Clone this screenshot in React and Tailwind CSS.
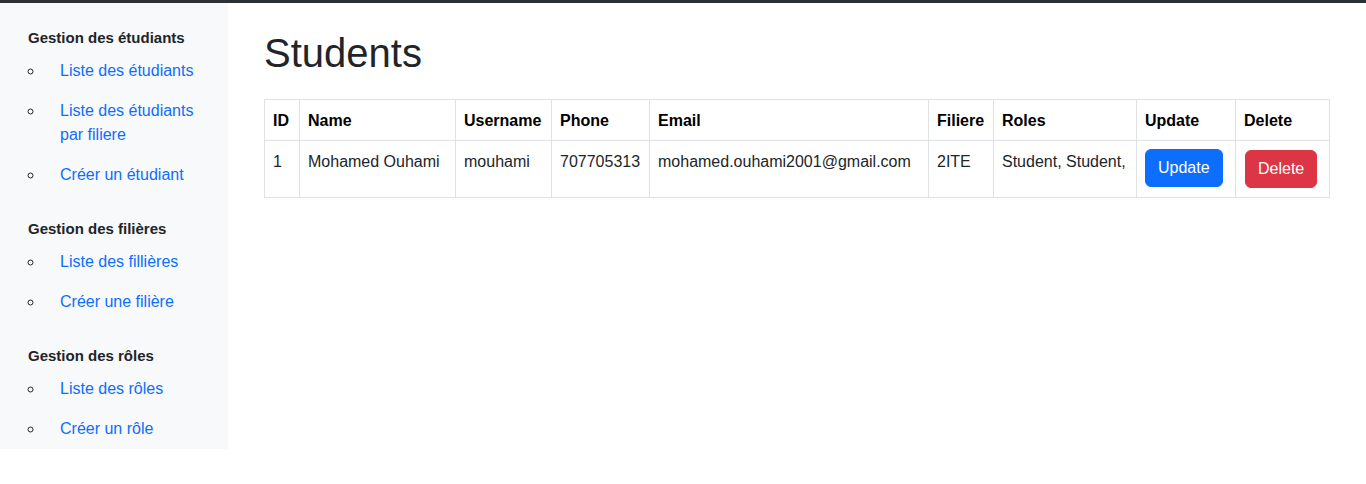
import React from 'react';

const sections = [
  {
    title: 'Gestion des étudiants',
    links: ['Liste des étudiants', 'Liste des étudiants par filiere', 'Créer un étudiant'],
  },
  {
    title: 'Gestion des filières',
    links: ['Liste des fillières', 'Créer une filière'],
  },
  {
    title: 'Gestion des rôles',
    links: ['Liste des rôles', 'Créer un rôle'],
  },
];

const students = [
  {
    id: 1,
    name: 'Mohamed Ouhami',
    username: 'mouhami',
    phone: '707705313',
    email: 'mohamed.ouhami2001@gmail.com',
    filiere: '2ITE',
    roles: 'Student, Student,',
  },
];

const Sidebar = () => (
  <aside className="w-[228px] shrink-0 bg-[#f8f9fa] px-3 pt-[22px] pb-px flex flex-col gap-[22px]">
    {sections.map((s) => (
      <div key={s.title}>
        <h6 className="px-4 text-[15px] font-bold leading-[25px] text-[#212529]">{s.title}</h6>
        <ul className="list-[circle] list-outside pl-8">
          {s.links.map((l) => (
            <li key={l} className="marker:text-[#212529]">
              <a href="#" className="block px-4 pt-[9px] pb-[7px] leading-6 text-[#0d6efd]">
                {l}
              </a>
            </li>
          ))}
        </ul>
      </div>
    ))}
  </aside>
);

const cell = 'border border-[#dee2e6] px-2 pt-[9px] pb-[7px] leading-6 align-top';

const StudentsTable = () => (
  <table className="w-full table-fixed border-collapse text-left">
    <colgroup>
      <col className="w-[35px]" />
      <col className="w-[156px]" />
      <col className="w-[96px]" />
      <col className="w-[98px]" />
      <col className="w-[279px]" />
      <col className="w-[65px]" />
      <col className="w-[143px]" />
      <col className="w-[99px]" />
      <col className="w-[94px]" />
    </colgroup>
    <thead>
      <tr>
        {['ID', 'Name', 'Username', 'Phone', 'Email', 'Filiere', 'Roles', 'Update', 'Delete'].map((h) => (
          <th key={h} className={`${cell} font-bold text-black whitespace-nowrap`}>
            {h}
          </th>
        ))}
      </tr>
    </thead>
    <tbody>
      {students.map((st) => (
        <tr key={st.id}>
          <td className={cell}>{st.id}</td>
          <td className={cell}>{st.name}</td>
          <td className={cell}>{st.username}</td>
          <td className={cell}>{st.phone}</td>
          <td className={cell}>{st.email}</td>
          <td className={cell}>{st.filiere}</td>
          <td className={`${cell} whitespace-nowrap`}>{st.roles}</td>
          <td className="border border-[#dee2e6] p-2 leading-6 align-top">
            <button className="rounded-md border border-[#0d6efd] bg-[#0d6efd] px-3 py-1.5 leading-6 text-white">
              Update
            </button>
          </td>
          <td className="border border-[#dee2e6] p-2 leading-6 align-top">
            <div className="py-px pl-px">
              <button className="rounded-md border border-[#dc3545] bg-[#dc3545] px-3 py-1.5 leading-6 text-white">
                Delete
              </button>
            </div>
          </td>
        </tr>
      ))}
    </tbody>
  </table>
);

export default function App() {
  return (
    <div className="min-h-screen bg-white border-t-[3px] border-[#2b3035] font-['Liberation_Sans',Arial,sans-serif] text-base text-[#212529]">
      <div className="flex items-start">
        <Sidebar />
        <main className="flex-1 px-9 pt-[26px]">
          <h1 className="mb-[22px] text-[40px] font-medium leading-[48px]">Students</h1>
          <StudentsTable />
        </main>
      </div>
    </div>
  );
}
